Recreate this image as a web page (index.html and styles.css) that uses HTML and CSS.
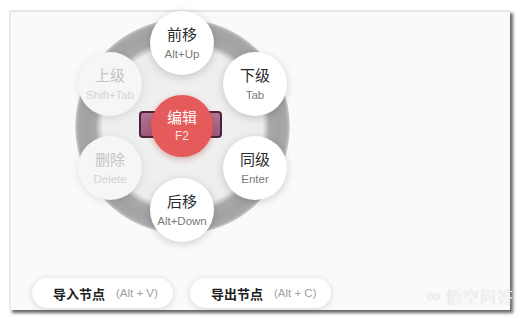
FILE: index.html
```html
<!DOCTYPE html>
<html lang="zh">
<head>
<meta charset="utf-8">
<title>节点菜单</title>
<link rel="stylesheet" href="styles.css">
</head>
<body>
<div class="panel">
  <div class="stage">
    <div class="ring"></div>
    <div class="bar"></div>
    <div class="node n-top"><span class="t">前移</span><span class="s">Alt+Up</span></div>
    <div class="node n-ur"><span class="t">下级</span><span class="s">Tab</span></div>
    <div class="node n-lr"><span class="t">同级</span><span class="s">Enter</span></div>
    <div class="node n-bot"><span class="t">后移</span><span class="s">Alt+Down</span></div>
    <div class="node n-ll off"><span class="t">删除</span><span class="s">Delete</span></div>
    <div class="node n-ul off"><span class="t">上级</span><span class="s">Shift+Tab</span></div>
    <div class="center"><span class="t">编辑</span><span class="s">F2</span></div>
  </div>
  <div class="actions">
    <div class="pill"><span class="label">导入节点</span><span class="key">(Alt + V)</span></div>
    <div class="pill"><span class="label">导出节点</span><span class="key">(Alt + C)</span></div>
  </div>
  <div class="mark"><span class="mark-icon">∞</span>悟空问答</div>
</div>
</body>
</html>
```
FILE: styles.css
```css
* { box-sizing: border-box; }
html, body { margin: 0; padding: 0; background: #ffffff; }
body {
  font-family: "Liberation Sans", "Noto Sans CJK SC", sans-serif;
  width: 521px;
  height: 321px;
  overflow: hidden;
}
.panel {
  position: relative;
  margin: 10px 0 0 9px;
  width: 501px;
  height: 300px;
  background: #fafafa;
  border-top: 2px solid #e6e6e6;
  border-left: 2px solid #e9e9e9;
  box-shadow: 3px 3px 3px rgba(0, 0, 0, 0.6);
}
.stage {
  position: relative;
  width: 215px;
  height: 215px;
  margin: 7px 0 0 64px;
}
.ring {
  position: absolute;
  inset: 0;
  border-radius: 50%;
  background: radial-gradient(circle closest-side,
    #f2f2f2 0, #ededed 80px, #c8c8c8 84px, #a9a9a9 87px,
    #a3a3a3 97px, #a8a8a8 104px, #c0c0c0 106.5px, rgba(240,240,240,0) 108px);
}
.bar {
  position: absolute;
  left: 64px;
  top: 92px;
  width: 83px;
  height: 27px;
  border-radius: 4px;
  background: linear-gradient(#b27596, #9c5a7e);
  border: 2px solid #4c2437;
}
.node {
  position: absolute;
  width: 64px;
  height: 64px;
  border-radius: 50%;
  background: #ffffff;
  box-shadow: 0 2px 8px rgba(0, 0, 0, 0.18);
  display: flex;
  flex-direction: column;
  align-items: center;
  justify-content: center;
  gap: 3px;
}
.node .t {
  font-size: 15px;
  line-height: 18px;
  color: #2a2a2a;
}
.node .s {
  font-size: 11.5px;
  line-height: 14px;
  color: #7a7a7a;
}
.node.off { background: #f6f6f6; box-shadow: 0 2px 8px rgba(0, 0, 0, 0.1); }
.node.off .t { color: #c4c4c4; }
.node.off .s { color: #d4d4d4; }
.n-top { left: 75px; top: -8px; }
.n-ur { left: 148px; top: 33px; }
.n-lr { left: 148px; top: 117px; }
.n-bot { left: 75px; top: 159px; }
.n-ll { left: 3px; top: 117px; }
.n-ul { left: 3px; top: 33px; }
.center {
  position: absolute;
  left: 76px;
  top: 76px;
  width: 62px;
  height: 62px;
  border-radius: 50%;
  background: #e55a5a;
  box-shadow: 0 2px 6px rgba(160, 40, 40, 0.35);
  display: flex;
  flex-direction: column;
  align-items: center;
  justify-content: center;
  gap: 2px;
  color: #ffffff;
}
.center .t { font-size: 15px; line-height: 18px; }
.center .s { font-size: 12px; line-height: 14px; color: #fbe3e3; }
.actions {
  display: flex;
  gap: 17px;
  margin: 44px 0 0 21px;
}
.pill {
  width: 141px;
  height: 30px;
  border-radius: 15px;
  background: #ffffff;
  box-shadow: 0 1px 6px rgba(0, 0, 0, 0.16);
  display: flex;
  align-items: center;
  gap: 11px;
  padding-left: 21px;
}
.label {
  font-size: 13px;
  font-weight: bold;
  color: #1e1e1e;
}
.key {
  font-size: 11.5px;
  color: #a0a0a0;
}
.mark {
  position: absolute;
  right: -4px;
  bottom: 2px;
  display: flex;
  align-items: center;
  gap: 5px;
  font-size: 16px;
  color: #f6f6f6;
  text-shadow: 0 0 1px #c4c4c4;
  letter-spacing: 1px;
}
.mark-icon { font-size: 18px; }
```
